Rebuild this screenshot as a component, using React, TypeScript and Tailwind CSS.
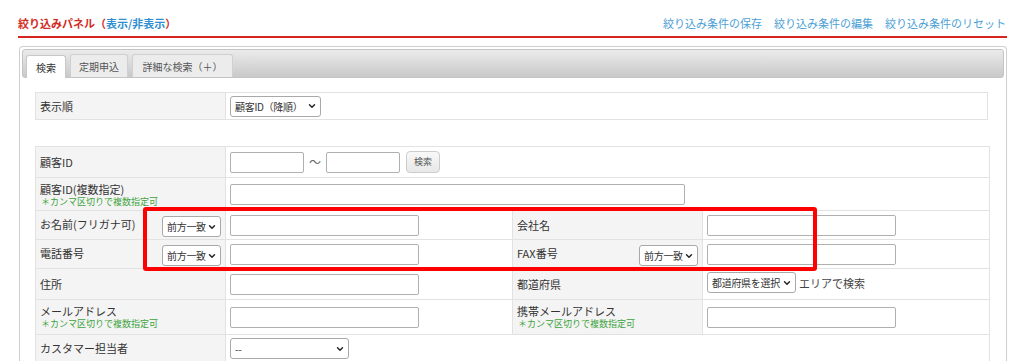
import { ChevronDown } from "lucide-react";

const font = { fontFamily: '"Noto Sans CJK JP", "Noto Sans", sans-serif' };

const Sel = ({ label, w }: { label: string; w: string }) => (
    <div className={`${w} h-[21px] flex items-center justify-between pl-[4px] pr-[3px] bg-white border border-[#a9a9a9] rounded-[3px] text-[10px] tracking-[-0.3px] text-[#333] whitespace-nowrap overflow-hidden`}>
        <span>{label}</span>
        <ChevronDown size={10} strokeWidth={3.4} className="text-[#222] shrink-0" />
    </div>
)

const Input = ({ w }: { w: string }) => (
    <div className={`${w} h-[21px] bg-white border border-[#b0b0b0] rounded-[2px]`} />
)

const Note = () => (
    <div className="text-[9px] leading-[11px] text-[#3ea33e] pl-[1px]">＊カンマ区切りで複数指定可</div>
)

const Label = ({ children, extra, top }: { children: React.ReactNode; extra?: React.ReactNode; top?: boolean }) => (
    <div className={`bg-[#f3f4f3] border-r border-[#e2e2e2] flex ${top ? "items-start pt-[5px]" : "items-center"} justify-between pl-[4px] pr-[4px] text-[11px] text-[#333]`}>
        <div>{children}</div>
        {extra}
    </div>
)

const Value = ({ children, last }: { children?: React.ReactNode; last?: boolean }) => (
    <div className={`flex items-center pl-[4px] ${last ? "" : "border-r border-[#e2e2e2]"}`}>{children}</div>
)

export default function App() {
    return (
        <div className="w-[1024px] h-[361px] overflow-hidden bg-white" style={font}>
            <div className="pl-[18px] w-[1007px]">
                <div className="h-[36px] flex items-end justify-between pb-[5px] text-[11px]">
                    <div className="font-bold text-[#d12c24]">
                        絞り込みパネル（<span className="text-[#2f8fd0]">表示/非表示</span>）
                    </div>
                    <div className="flex gap-[12px] text-[#4d9fd6] pr-[1px]">
                        <span>絞り込み条件の保存</span>
                        <span>絞り込み条件の編集</span>
                        <span>絞り込み条件のリセット</span>
                    </div>
                </div>
                <div className="h-[2px] bg-[#d6261f]" />
                <div className="mt-[8px] ml-[1px] border border-[#cfcfcf] border-b-0 rounded-t-[4px] pt-[2px] px-[2px] h-[320px]">
                    <div className="h-[29px] rounded-[3px] bg-linear-to-b from-[#ebebeb] to-[#c9c9c9] border border-[#c4c4c4] flex items-end gap-[4px] pl-[3px] text-[10px] text-[#555]">
                        <div className="h-[23px] w-[40px] bg-white border border-b-0 border-[#c8c8c8] rounded-t-[3px] flex items-center justify-center text-[#333] -mb-[1px]">検索</div>
                        <div className="h-[23px] w-[58px] bg-[#ececec] border border-b-0 border-[#d0d0d0] rounded-t-[3px] flex items-center justify-center">定期申込</div>
                        <div className="h-[23px] w-[101px] bg-[#ececec] border border-b-0 border-[#d0d0d0] rounded-t-[3px] flex items-center justify-center">詳細な検索（＋）</div>
                    </div>
                    <div className="pl-[13px] pt-[14px]">
                        <div className="w-[953px] h-[28px] border border-[#e2e2e2] grid grid-cols-[190px_1fr]">
                            <Label>表示順</Label>
                            <Value last><Sel label="顧客ID（降順）" w="w-[91px]" /></Value>
                        </div>
                        <div className="relative mt-[26px] w-[955px] border border-[#e2e2e2] border-b-0">
                            <div className="grid grid-cols-[190px_1fr] h-[31px] border-b border-[#e2e2e2]">
                                <Label>顧客ID</Label>
                                <Value last>
                                    <Input w="w-[74px]" />
                                    <span className="mx-[5px] text-[12px] text-[#666]">～</span>
                                    <Input w="w-[74px]" />
                                    <div className="ml-[6px] h-[22px] w-[34px] rounded-[4px] border border-[#cccccc] bg-linear-to-b from-[#f8f8f8] to-[#e8e8e8] text-[9px] text-[#555] flex items-center justify-center">検索</div>
                                </Value>
                            </div>
                            <div className="grid grid-cols-[190px_1fr] h-[33px] border-b border-[#e2e2e2]">
                                <Label top>
                                    <div className="leading-[13px]">顧客ID(複数指定)</div>
                                    <Note />
                                </Label>
                                <Value last><Input w="w-[455px]" /></Value>
                            </div>
                            <div className="grid grid-cols-[190px_287px_190px_1fr] h-[29px] border-b border-[#e2e2e2]">
                                <Label top extra={<Sel label="前方一致" w="w-[59px]" />}>お名前(フリガナ可)</Label>
                                <Value><Input w="w-[189px]" /></Value>
                                <Label>会社名</Label>
                                <Value last><Input w="w-[189px]" /></Value>
                            </div>
                            <div className="grid grid-cols-[190px_287px_190px_1fr] h-[29px] border-b border-[#e2e2e2]">
                                <Label top extra={<Sel label="前方一致" w="w-[59px]" />}>電話番号</Label>
                                <Value><Input w="w-[189px]" /></Value>
                                <Label top extra={<Sel label="前方一致" w="w-[59px]" />}>FAX番号</Label>
                                <Value last><Input w="w-[189px]" /></Value>
                            </div>
                            <div className="grid grid-cols-[190px_287px_190px_1fr] h-[31px] border-b border-[#e2e2e2]">
                                <Label>住所</Label>
                                <Value><Input w="w-[189px]" /></Value>
                                <Label>都道府県</Label>
                                <div className="flex items-start pt-[3px] pl-[4px] text-[11px] text-[#444]">
                                    <Sel label="都道府県を選択" w="w-[89px]" />
                                    <span className="ml-[3px] mt-[3px]">エリアで検索</span>
                                </div>
                            </div>
                            <div className="grid grid-cols-[190px_287px_190px_1fr] h-[35px] border-b border-[#e2e2e2]">
                                <Label top>
                                    <div className="leading-[13px]">メールアドレス</div>
                                    <Note />
                                </Label>
                                <Value><Input w="w-[189px]" /></Value>
                                <Label top>
                                    <div className="leading-[13px]">携帯メールアドレス</div>
                                    <Note />
                                </Label>
                                <Value last><Input w="w-[189px]" /></Value>
                            </div>
                            <div className="grid grid-cols-[190px_1fr] h-[28px] border-b border-[#e2e2e2]">
                                <Label>カスタマー担当者</Label>
                                <Value last><Sel label="--" w="w-[119px]" /></Value>
                            </div>
                            <div className="absolute left-[107px] top-[60px] w-[674px] h-[64px] border-[4px] border-[#ff0000] rounded-[3px]" />
                        </div>
                    </div>
                </div>
            </div>
        </div>
    )
}
